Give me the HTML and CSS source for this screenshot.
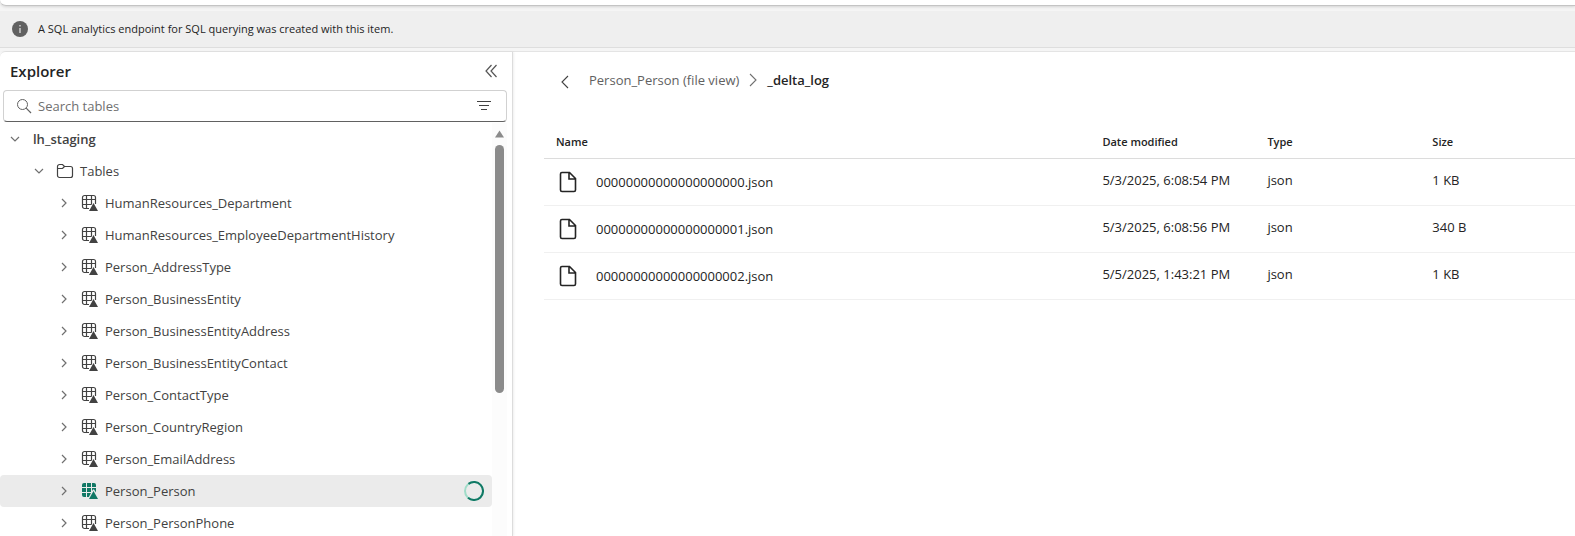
FILE: index.html
```html
<!DOCTYPE html>
<html lang="en">
<head>
<meta charset="utf-8">
<title>Lakehouse explorer</title>
<link rel="stylesheet" href="styles.css">
</head>
<body>
<svg class="defs" aria-hidden="true">
  <symbol id="chevron-right" viewBox="0 0 12 12"><path d="M4 2l4 4-4 4" fill="none" stroke="currentColor" stroke-width="1.2"/></symbol>
  <symbol id="chevron-down" viewBox="0 0 12 12"><path d="M2 4l4 4 4-4" fill="none" stroke="currentColor" stroke-width="1.2"/></symbol>
  <symbol id="table" viewBox="0 0 18 18">
    <path d="M8 14.500H3.500a2 2 0 0 1-2-2v-9a2 2 0 0 1 2-2h9a2 2 0 0 1 2 2V10M1.500 5.500h13M1.500 10.500h9M5.500 1.500v13M10.500 1.500v9" fill="none" stroke="currentColor" stroke-width="1.200"/>
    <path d="M12.500 9L17 17H8z" fill="currentColor"/>
  </symbol>
  <symbol id="table-filled" viewBox="0 0 18 18">
    <path d="M3 1h2v4H1V3a2 2 0 0 1 2-2zM6 1h4v4H6zM11 1h2a2 2 0 0 1 2 2v2h-4zM1 6h4v4H1zM6 6h4v4H6zM11 6h4v4.500L13 7.500h-1l-1 1.500zM1 11h4v4H3a2 2 0 0 1-2-2zM6 11h4l-2.200 4H6z" fill="currentColor"/>
    <path d="M12.500 9L17 17H8z" fill="currentColor"/>
  </symbol>
  <symbol id="file" viewBox="0 0 24 24"><path d="M5.500 2.500h8l6 6v11.500a1.500 1.500 0 0 1-1.500 1.500H6A1.500 1.500 0 0 1 4.500 20V4A1.500 1.500 0 0 1 6 2.500M13 3v6h6.500" fill="none" stroke="currentColor" stroke-width="1.600"/></symbol>
</svg>

<div class="ribbon"></div>

<div class="notice" role="status">
  <svg class="notice-icon" viewBox="0 0 16 16"><circle cx="8" cy="8" r="8" fill="#616161"/><path d="M8 7v5M8 4v1.500" stroke="#e8e8e8" stroke-width="1.200"/></svg>
  <span>A SQL analytics endpoint for SQL querying was created with this item.</span>
</div>

<div class="workspace">
  <aside class="explorer">
    <header class="explorer-head">
      <h1>Explorer</h1>
      <button class="icon-button" aria-label="Collapse explorer"><svg class="icon-16" viewBox="0 0 16 16"><path d="M8.500 2L3 8l5.500 6M13.500 2L8 8l5.500 6" fill="none" stroke="#555" stroke-width="1.200"/></svg></button>
    </header>
    <div class="search">
      <svg class="icon-16" viewBox="0 0 16 16"><circle cx="6.500" cy="6.500" r="5" fill="none" stroke="#616161"/><path d="M10.200 10.200L15 15" stroke="#616161" stroke-width="1.200"/></svg>
      <input type="text" placeholder="Search tables" aria-label="Search tables">
      <button class="icon-button" aria-label="Filter"><svg class="icon-16" viewBox="0 0 16 16"><path d="M1 3.500h14M3 7.500h10M5 11.500h6" stroke="#424242" stroke-width="1.100"/></svg></button>
    </div>
    <div class="tree-area">
      <ul class="tree">
        <li class="node root"><svg class="chevron"><use href="#chevron-down"/></svg><span>lh_staging</span></li>
        <li class="node folder"><svg class="chevron"><use href="#chevron-down"/></svg><svg class="icon-18" viewBox="0 0 18 18"><path d="M1.500 13.500v-9a2 2 0 0 1 2-2h3L8.500 4.500h6a2 2 0 0 1 2 2v7a2 2 0 0 1-2 2h-11a2 2 0 0 1-2-2zM1.500 6.500h5l2-2" fill="none" stroke="currentColor" stroke-width="1.200"/></svg><span>Tables</span></li>
        <li class="node"><svg class="chevron"><use href="#chevron-right"/></svg><svg class="icon-18"><use href="#table"/></svg><span>HumanResources_Department</span></li>
        <li class="node"><svg class="chevron"><use href="#chevron-right"/></svg><svg class="icon-18"><use href="#table"/></svg><span>HumanResources_EmployeeDepartmentHistory</span></li>
        <li class="node"><svg class="chevron"><use href="#chevron-right"/></svg><svg class="icon-18"><use href="#table"/></svg><span>Person_AddressType</span></li>
        <li class="node"><svg class="chevron"><use href="#chevron-right"/></svg><svg class="icon-18"><use href="#table"/></svg><span>Person_BusinessEntity</span></li>
        <li class="node"><svg class="chevron"><use href="#chevron-right"/></svg><svg class="icon-18"><use href="#table"/></svg><span>Person_BusinessEntityAddress</span></li>
        <li class="node"><svg class="chevron"><use href="#chevron-right"/></svg><svg class="icon-18"><use href="#table"/></svg><span>Person_BusinessEntityContact</span></li>
        <li class="node"><svg class="chevron"><use href="#chevron-right"/></svg><svg class="icon-18"><use href="#table"/></svg><span>Person_ContactType</span></li>
        <li class="node"><svg class="chevron"><use href="#chevron-right"/></svg><svg class="icon-18"><use href="#table"/></svg><span>Person_CountryRegion</span></li>
        <li class="node"><svg class="chevron"><use href="#chevron-right"/></svg><svg class="icon-18"><use href="#table"/></svg><span>Person_EmailAddress</span></li>
        <li class="node selected"><svg class="chevron"><use href="#chevron-right"/></svg><svg class="icon-18 accent"><use href="#table-filled"/></svg><span>Person_Person</span>
          <svg class="spinner" viewBox="0 0 20 20"><circle cx="10" cy="10" r="9" stroke="#9fdcc8"/><path d="M4.500 2.900A9 9 0 1 1 4 16.700" stroke="#117865"/></svg></li>
        <li class="node"><svg class="chevron"><use href="#chevron-right"/></svg><svg class="icon-18"><use href="#table"/></svg><span>Person_PersonPhone</span></li>
      </ul>
      <div class="scrollbar" aria-hidden="true">
        <svg class="scroll-arrow" viewBox="0 0 9 8"><path d="M4.500.5L9 7.500H0z" fill="#8b8b8b"/></svg>
        <div class="thumb"></div>
      </div>
    </div>
  </aside>

  <main class="content">
    <nav class="breadcrumb" aria-label="Breadcrumb">
      <button class="icon-button back" aria-label="Back"><svg class="icon-16" viewBox="0 0 16 16"><path d="M11 2L5 8l6 6" fill="none" stroke="#424242" stroke-width="1.100"/></svg></button>
      <a href="#">Person_Person (file view)</a>
      <svg class="icon-16" viewBox="0 0 16 16"><path d="M5 2l6 6-6 6" fill="none" stroke="#707070" stroke-width="1.100"/></svg>
      <strong>_delta_log</strong>
    </nav>
    <table class="files">
      <thead><tr><th class="col-name">Name</th><th class="col-date">Date modified</th><th class="col-type">Type</th><th>Size</th></tr></thead>
      <tbody>
        <tr><td><div class="file"><svg><use href="#file"/></svg><span>00000000000000000000.json</span></div></td><td>5/3/2025, 6:08:54 PM</td><td>json</td><td>1 KB</td></tr>
        <tr><td><div class="file"><svg><use href="#file"/></svg><span>00000000000000000001.json</span></div></td><td>5/3/2025, 6:08:56 PM</td><td>json</td><td>340 B</td></tr>
        <tr><td><div class="file"><svg><use href="#file"/></svg><span>00000000000000000002.json</span></div></td><td>5/5/2025, 1:43:21 PM</td><td>json</td><td>1 KB</td></tr>
      </tbody>
    </table>
  </main>
</div>
</body>
</html>
```
FILE: styles.css
```css
* { box-sizing: border-box; }

body {
  margin: 0;
  height: 100vh;
  display: flex;
  flex-direction: column;
  overflow: hidden;
  background: #f5f5f5;
  color: #242424;
  font: 13px/20px "Open Sans", "Noto Sans", sans-serif;
}

svg { display: block; flex: none; }
.defs { position: absolute; width: 0; height: 0; }
.icon-16 { width: 16px; height: 16px; }
.icon-18 { width: 18px; height: 18px; }
.icon-button { display: flex; padding: 0; border: 0; background: none; }

.ribbon {
  flex: none;
  height: 6px;
  background: #fff;
  border-bottom: 1px solid #c4c4c4;
  border-radius: 0 0 0 6px;
  box-shadow: 0 1px 3px #0002;
}

.notice {
  flex: none;
  display: flex;
  align-items: center;
  gap: 10px;
  height: 37px;
  margin-top: 5px;
  padding-left: 12px;
  background: #efefef;
  border-bottom: 1px solid #dedede;
  font-size: 11px;
}
.notice-icon { width: 16px; height: 16px; }

.workspace {
  flex: 1;
  min-height: 0;
  display: flex;
  margin-top: 3px;
  background: #fff;
  border-top: 1px solid #e4e4e4;
  border-radius: 6px 0 0 0;
}

.explorer {
  flex: none;
  width: 513px;
  display: flex;
  flex-direction: column;
  border-right: 1px solid #dcdcdc;
  box-shadow: 1px 0 2px #0001;
}
.explorer-head {
  display: flex;
  align-items: center;
  justify-content: space-between;
  height: 38px;
  padding: 0 13px 0 10px;
}
.explorer-head h1 { margin: 0; font-size: 15px; font-weight: 600; }

.search {
  flex: none;
  display: flex;
  align-items: center;
  gap: 6px;
  height: 32px;
  margin: 0 5px 0 3px;
  padding: 0 14px 0 12px;
  border: 1px solid #d1d1d1;
  border-bottom-color: #616161;
  border-radius: 4px;
}
.search input {
  flex: 1;
  min-width: 0;
  padding: 0;
  border: 0;
  outline: 0;
  background: none;
  font: inherit;
}
.search input::placeholder { color: #707070; opacity: 1; }

.tree-area { flex: 1; min-height: 0; display: flex; margin-top: 1px; overflow: hidden; }
.tree { flex: 1; margin: 0; padding: 0; list-style: none; color: #424242; }
.node {
  display: flex;
  align-items: center;
  height: 32px;
  padding: 0 8px 0 58px;
  border-radius: 4px;
}
.node.folder { padding-left: 33px; }
.node.root { padding-left: 9px; font-weight: 600; }
.node .icon-18 { margin: 0 6px 0 11px; }
.node.root span { margin-left: 12px; }
.chevron { width: 12px; height: 12px; color: #707070; }
.selected { background: #ebebeb; }
.accent { color: #117865; }
.spinner { width: 20px; height: 20px; margin-left: auto; fill: none; stroke-width: 2; }

.scrollbar {
  flex: none;
  width: 15px;
  margin-right: 5px;
  padding-top: 7px;
  display: flex;
  flex-direction: column;
  align-items: center;
  gap: 7px;
  background: #fcfcfc;
}
.scroll-arrow { width: 9px; height: 8px; }
.thumb { width: 9px; height: 61%; border-radius: 5px; background: #8b8b8b; }

.content { flex: 1; min-width: 0; padding: 18px 0 0 31px; }
.breadcrumb { display: flex; align-items: center; gap: 6px; height: 20px; padding-left: 13px; }
.breadcrumb a { color: #616161; text-decoration: none; }
.breadcrumb strong { font-weight: 600; }
.back { margin: 4px 10px 0 0; }

.files { width: 100%; margin-top: 34px; border-collapse: collapse; table-layout: fixed; }
.files th, .files td { padding: 0 12px; text-align: left; }
.files th { height: 34px; padding-top: 2px; border-bottom: 1px solid #dcdcdc; font-size: 11px; font-weight: 600; }
.files td { height: 47px; padding-bottom: 4px; border-bottom: 1px solid #f0f0f0; }
.col-name { width: 53%; }
.col-date, .col-type { width: 16%; }
.file { display: flex; align-items: center; gap: 16px; margin-top: 4px; }
.file svg { width: 24px; height: 24px; }
```
